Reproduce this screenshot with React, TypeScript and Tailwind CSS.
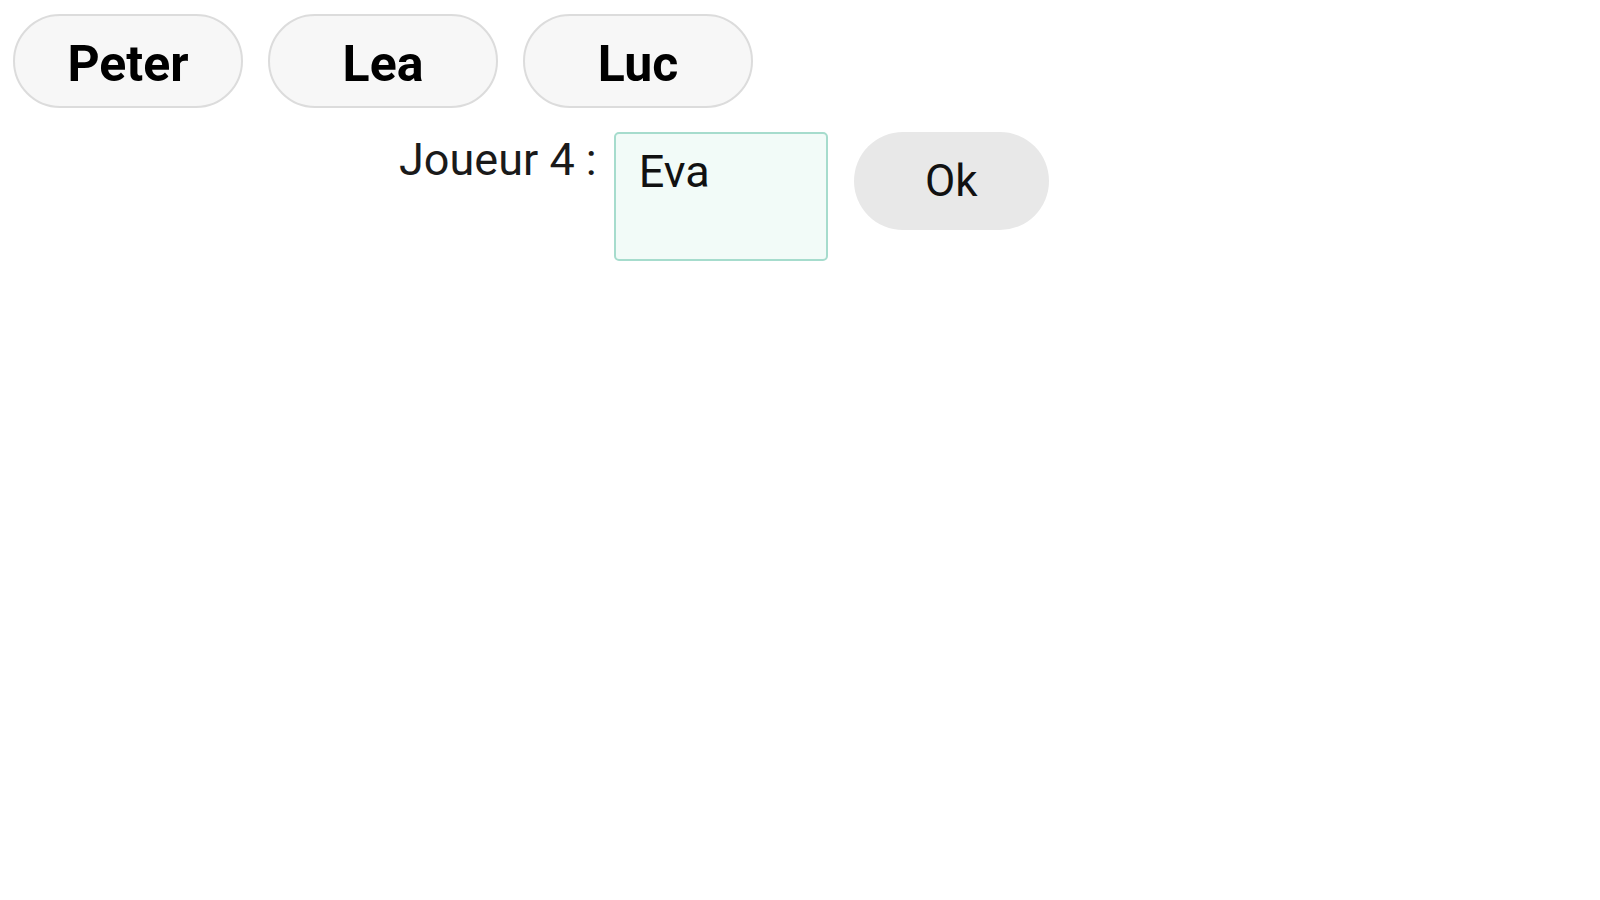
const PLAYERS = ['Peter', 'Lea', 'Luc'];

export default function App() {
  return (
    <div className="min-h-screen bg-white font-['Roboto','Liberation_Sans',sans-serif] text-black">
      <div className="flex gap-[25px] pl-[13px] pt-[14px]">
        {PLAYERS.map(name => (
          <button
            key={name}
            className="flex h-[94px] w-[230px] items-center justify-center rounded-full border-2 border-[#dcdcdc] bg-[#f7f7f7] pt-[5px] text-[50px] font-bold leading-none"
          >
            {name}
          </button>
        ))}
      </div>
      <div className="mt-[24px] flex items-start pl-[399px]">
        <label className="mt-[5px] text-[45px] leading-none text-[#1a1a1a]">Joueur 4 :</label>
        <textarea
          readOnly
          defaultValue="Eva"
          className="ml-[17px] h-[129px] w-[214px] resize-none rounded-[5px] border-2 border-[#a6dccd] bg-[#f2fbf8] pl-[23px] pt-[15px] text-[45px] leading-none text-[#111] outline-none"
        />
        <button className="ml-[26px] flex h-[98px] w-[195px] items-center justify-center rounded-[49px] bg-[#e8e8e8] text-[44px] leading-none text-[#111]">
          Ok
        </button>
      </div>
    </div>
  );
}
